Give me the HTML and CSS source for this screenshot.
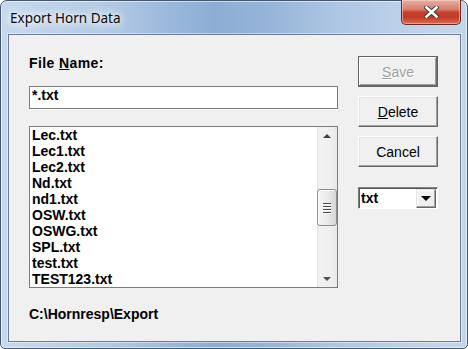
FILE: index.html
```html
<!DOCTYPE html>
<html lang="en">
<head>
    <meta charset="UTF-8">
    <title>Export Horn Data</title>
    <link rel="stylesheet" href="styles.css">
</head>
<body>
    <div class="window">
        <div class="titlebar">
            <span class="title">Export Horn Data</span>
            <div class="close-btn" role="button" aria-label="Close">
                <svg width="15" height="12" viewBox="0 0 15 12">
                    <path d="M2.5 1.5 L12.5 10.5 M12.5 1.5 L2.5 10.5" stroke="#3b3b3b" stroke-width="4.5" stroke-linecap="square"/>
                    <path d="M2.5 1.5 L12.5 10.5 M12.5 1.5 L2.5 10.5" stroke="#ffffff" stroke-width="2.6" stroke-linecap="square"/>
                </svg>
            </div>
        </div>

        <div class="client">
            <div class="main-col">
                <div class="label">File <u>N</u>ame:</div>
                <div class="filename">*.txt</div>

                <div class="filelist">
                    <ul class="items">
                        <li>Lec.txt</li>
                        <li>Lec1.txt</li>
                        <li>Lec2.txt</li>
                        <li>Nd.txt</li>
                        <li>nd1.txt</li>
                        <li>OSW.txt</li>
                        <li>OSWG.txt</li>
                        <li>SPL.txt</li>
                        <li>test.txt</li>
                        <li>TEST123.txt</li>
                    </ul>
                    <div class="scrollbar">
                        <div class="sb-arrow"><span class="tri-up"></span></div>
                        <div class="sb-track">
                            <div class="sb-thumb">
                                <span></span><span></span><span></span><span></span>
                            </div>
                        </div>
                        <div class="sb-arrow"><span class="tri-down"></span></div>
                    </div>
                </div>

                <div class="path">C:\Hornresp\Export</div>
            </div>

            <div class="side-col">
                <div class="btn default disabled"><u>S</u>ave</div>
                <div class="btn"><u>D</u>elete</div>
                <div class="btn">Cancel</div>

                <div class="combo">
                    <span class="combo-text">txt</span>
                    <div class="combo-btn"><span class="tri-down black"></span></div>
                </div>
            </div>
        </div>
    </div>
</body>
</html>
```

FILE: styles.css
```css
* {
    box-sizing: border-box;
}

body {
    margin: 0;
    background: #ffffff;
    font-family: "Liberation Sans", Arial, sans-serif;
    color: #000000;
}

.window {
    width: 468px;
    height: 349px;
    border: 1px solid #47586d;
    border-radius: 7px 7px 5px 5px;
    padding: 0 6px 6px 7px;
    display: flex;
    flex-direction: column;
    background: linear-gradient(to right, #c6d9ee 0%, #b4cbe5 22%, #9bb8dc 36%, #8dadd4 46%, #97b5d9 58%, #adc6e3 72%, #bcd1e9 86%, #c3d6eb 100%);
    box-shadow: inset 0 0 0 1px rgba(255, 255, 255, 0.55);
}

.titlebar {
    height: 33px;
    display: flex;
    align-items: flex-start;
    justify-content: space-between;
}

.title {
    margin: 8px 0 0 2px;
    font-family: "Noto Sans", "Open Sans", sans-serif;
    font-size: 13.5px;
    line-height: 18px;
    color: #0a0a0a;
    text-shadow: 0 0 6px #ffffff, 0 0 10px #ffffff, 0 0 14px rgba(255, 255, 255, 0.8);
}

.close-btn {
    margin-top: -1px;
    width: 60px;
    height: 25px;
    border: 1px solid #6b2a22;
    border-top: none;
    border-radius: 0 0 5px 5px;
    background: linear-gradient(to bottom, #e6b0a6 0%, #d77c6c 40%, #c7432f 50%, #c23a26 70%, #d66c52 100%);
    box-shadow: inset 0 0 0 1px rgba(255, 220, 210, 0.5);
    display: flex;
    align-items: center;
    justify-content: center;
}

.client {
    flex: 1;
    border: 1px solid #6b7d92;
    background: #f0f0f0;
    display: flex;
    gap: 20px;
    padding: 20px 22px 0 20px;
    box-shadow: 0 0 0 1px rgba(255, 255, 255, 0.45);
}

.main-col {
    width: 309px;
}

.label,
.path,
.items,
.combo-text,
.filename {
    font-size: 14px;
    line-height: 16px;
    font-weight: bold;
}

.label {
    height: 16px;
    letter-spacing: 0.4px;
}

.filename {
    margin-top: 15px;
    height: 23px;
    border: 1px solid #7c7c7c;
    background: #ffffff;
    padding: 0 2px;
    box-shadow: 0 1px 0 #ffffff;
}

.filelist {
    margin-top: 17px;
    height: 162px;
    border: 1px solid #7c7c7c;
    background: #ffffff;
    display: flex;
}

.items {
    flex: 1;
    list-style: none;
    margin: 0;
    padding: 0 0 0 2px;
}

.scrollbar {
    width: 20px;
    display: flex;
    flex-direction: column;
    background: linear-gradient(to right, #e2e2e2 0px, #f2f2f2 2px, #efefef 14px, #e8e8e8 100%);
}

.sb-arrow {
    height: 17px;
    display: flex;
    align-items: center;
    justify-content: center;
}

.tri-up {
    width: 0;
    height: 0;
    border-left: 4px solid transparent;
    border-right: 4px solid transparent;
    border-bottom: 4px solid #404040;
}

.tri-down {
    width: 0;
    height: 0;
    border-left: 4px solid transparent;
    border-right: 4px solid transparent;
    border-top: 4px solid #505050;
}

.tri-down.black {
    border-left-width: 5px;
    border-right-width: 5px;
    border-top: 5px solid #000000;
}

.sb-track {
    flex: 1;
}

.sb-thumb {
    margin: 45px 0 0 0;
    height: 37px;
    border: 1px solid #8c8c8c;
    border-radius: 3px;
    background: linear-gradient(to right, #f4f4f4 0%, #ebebeb 50%, #d6d6d6 100%);
    box-shadow: inset 1px 1px 0 #ffffff;
    display: flex;
    flex-direction: column;
    align-items: center;
    justify-content: center;
    gap: 2px;
}

.sb-thumb span {
    width: 8px;
    height: 1px;
    background: #4a4a4a;
    box-shadow: 0 1px 0 #ffffff;
}

.path {
    margin-top: 18px;
}

.side-col {
    width: 80px;
    padding-top: 1px;
    display: flex;
    flex-direction: column;
    gap: 9px;
}

.btn {
    height: 31px;
    border: 1px solid;
    border-color: #ffffff #696969 #696969 #ffffff;
    box-shadow: inset -1px -1px 0 #a0a0a0, inset 1px 1px 0 #e3e3e3;
    background: #f0f0f0;
    display: flex;
    align-items: center;
    justify-content: center;
    font-size: 14px;
    line-height: 16px;
    cursor: pointer;
}

.btn.default {
    border-color: #646464;
    box-shadow: inset -1px -1px 0 #696969, inset 1px 1px 0 #ffffff, inset -2px -2px 0 #a0a0a0;
}

.btn.disabled {
    color: #a0a0a0;
    text-shadow: 1px 1px 0 #ffffff;
    cursor: default;
}

.combo {
    margin-top: 11px;
    height: 22px;
    border: 1px solid;
    border-color: #808080 #ffffff #ffffff #808080;
    box-shadow: inset 1px 1px 0 #5a5a5a;
    background: #ffffff;
    display: flex;
    align-items: center;
    padding: 0 1px 1px 2px;
}

.combo-text {
    flex: 1;
}

.combo-btn {
    width: 20px;
    height: 19px;
    margin-top: 1px;
    background: #f0f0f0;
    border: 1px solid;
    border-color: #e3e3e3 #696969 #696969 #e3e3e3;
    box-shadow: inset -1px -1px 0 #a0a0a0, inset 1px 1px 0 #ffffff;
    display: flex;
    align-items: center;
    justify-content: center;
}
```
